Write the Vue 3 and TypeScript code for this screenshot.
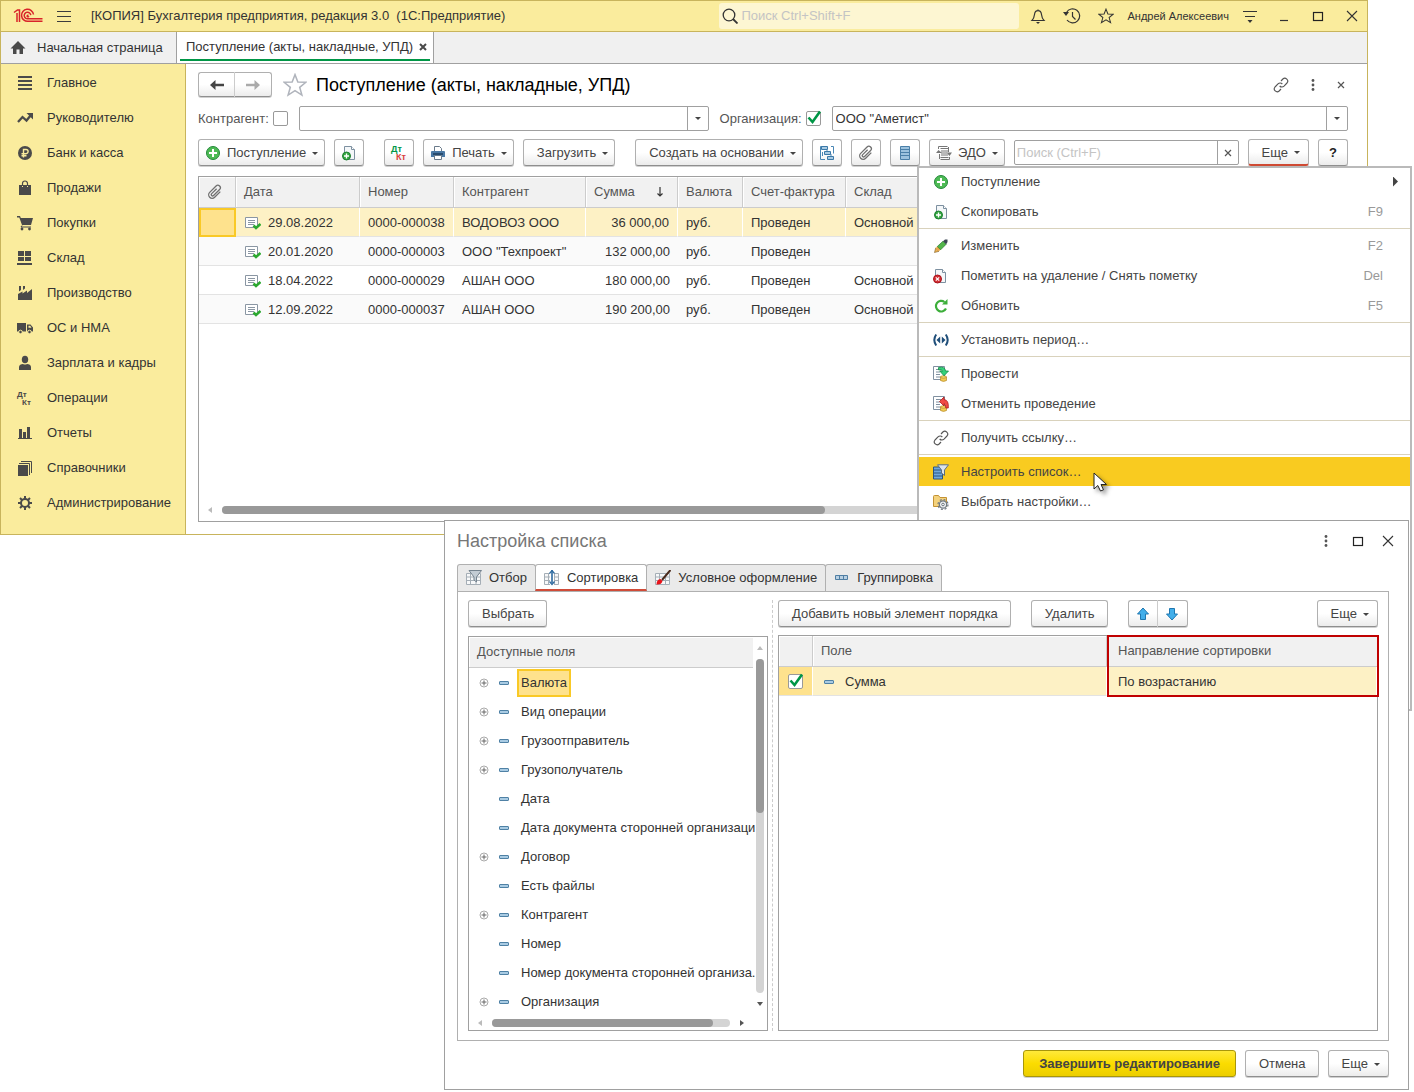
<script setup lang="ts">
import { ref } from 'vue'

interface NavItem { icon: string; label: string }
interface DocRow { date: string; num: string; partner: string; sum: string; store: string }
interface MenuItem { icon: string; label: string; key?: string; sub?: boolean; active?: boolean }
interface Field { label: string; open?: boolean; selected?: boolean }

const nav: NavItem[] = [
  { icon: 'lines', label: 'Главное' },
  { icon: 'trend', label: 'Руководителю' },
  { icon: 'ruble', label: 'Банк и касса' },
  { icon: 'bag', label: 'Продажи' },
  { icon: 'cart', label: 'Покупки' },
  { icon: 'store', label: 'Склад' },
  { icon: 'factory', label: 'Производство' },
  { icon: 'truck', label: 'ОС и НМА' },
  { icon: 'person', label: 'Зарплата и кадры' },
  { icon: 'dtkt', label: 'Операции' },
  { icon: 'chart', label: 'Отчеты' },
  { icon: 'books', label: 'Справочники' },
  { icon: 'gear', label: 'Администрирование' },
]

const docs: DocRow[] = [
  { date: '29.08.2022', num: '0000-000038', partner: 'ВОДОВОЗ ООО', sum: '36 000,00', store: 'Основной' },
  { date: '20.01.2020', num: '0000-000003', partner: 'ООО "Техпроект"', sum: '132 000,00', store: '' },
  { date: '18.04.2022', num: '0000-000029', partner: 'АШАН ООО', sum: '180 000,00', store: 'Основной' },
  { date: '12.09.2022', num: '0000-000037', partner: 'АШАН ООО', sum: '190 200,00', store: 'Основной' },
]

const menu: MenuItem[][] = [
  [
    { icon: 'plus', label: 'Поступление', sub: true },
    { icon: 'copy', label: 'Скопировать', key: 'F9' },
  ],
  [
    { icon: 'pencil', label: 'Изменить', key: 'F2' },
    { icon: 'docdel', label: 'Пометить на удаление / Снять пометку', key: 'Del' },
    { icon: 'refresh', label: 'Обновить', key: 'F5' },
  ],
  [{ icon: 'period', label: 'Установить период…' }],
  [
    { icon: 'post', label: 'Провести' },
    { icon: 'unpost', label: 'Отменить проведение' },
  ],
  [{ icon: 'link', label: 'Получить ссылку…' }],
  [
    { icon: 'setlist', label: 'Настроить список…', active: true },
    { icon: 'folder', label: 'Выбрать настройки…' },
  ],
]

const tabs = [
  { icon: 'tab-filter', label: 'Отбор' },
  { icon: 'tab-sort', label: 'Сортировка' },
  { icon: 'tab-format', label: 'Условное оформление' },
  { icon: 'tab-group', label: 'Группировка' },
]
const activeTab = ref(1)

const fields: Field[] = [
  { label: 'Валюта', open: true, selected: true },
  { label: 'Вид операции', open: true },
  { label: 'Грузоотправитель', open: true },
  { label: 'Грузополучатель', open: true },
  { label: 'Дата' },
  { label: 'Дата документа сторонней организаци' },
  { label: 'Договор', open: true },
  { label: 'Есть файлы' },
  { label: 'Контрагент', open: true },
  { label: 'Номер' },
  { label: 'Номер документа сторонней организа.' },
  { label: 'Организация', open: true },
]

const byPartner = ref(false)
const byOrg = ref(true)
const sortOn = ref(true)
const partner = ref('')
const org = ref('ООО "Аметист"')
</script>

<template>
  <svg class="sprite" aria-hidden="true">
    <symbol id="lines" viewBox="0 0 16 16"><path d="M1 2h14M1 6h14M1 10h14M1 14h14" stroke="#4a4a4a" stroke-width="2" /></symbol>
    <symbol id="trend" viewBox="0 0 16 16"><path d="M1 12l4.500-5 4 3.500L14 5" fill="none" stroke="#4a4a4a" stroke-width="2.300" /><path d="M9.500 3H16v6.500z" fill="#4a4a4a" /></symbol>
    <symbol id="ruble" viewBox="0 0 16 16"><circle cx="8" cy="8" r="7" fill="#4a4a4a" /><path d="M6.500 12.500V4.500h2.500a2 2 0 0 1 0 4.200H4.500M4.500 10.700h5" fill="none" stroke="#faec9d" stroke-width="1.400" /></symbol>
    <symbol id="bag" viewBox="0 0 16 16"><path d="M2 5h3v2h1V5h4v2h1V5h3v10H2z" fill="#4a4a4a" /><path d="M5.500 6V3.500a2.500 2.500 0 0 1 5 0V6" fill="none" stroke="#4a4a4a" stroke-width="1.200" /></symbol>
    <symbol id="cart" viewBox="0 0 16 16"><path d="M0 1h3l.8 2H16l-2 7H5L2.300 2.500H0z" fill="#4a4a4a" /><path d="M5 10.500L4 12h10" fill="none" stroke="#4a4a4a" /><circle cx="5" cy="14" r="1.400" fill="#4a4a4a" /><circle cx="12.500" cy="14" r="1.400" fill="#4a4a4a" /></symbol>
    <symbol id="store" viewBox="0 0 16 16"><path d="M1 1h6v5H1zM8 1h6v5H8zM1 7h6v4H1zM8 7h6v4H8zM0 13h15v2H0z" fill="#4a4a4a" /></symbol>
    <symbol id="factory" viewBox="0 0 16 16"><path d="M1 15V9l4.500-2.500v2L10 5.500v2.500L15 4v11zM2 1h2v4L2 6.500zM6 1h2v2.500L6 5z" fill="#4a4a4a" /></symbol>
    <symbol id="truck" viewBox="0 0 16 16"><path d="M0 3h9v8.500H0zM10 4.500h3.500L16 7.500v4h-6z" fill="#4a4a4a" /><path d="M11.500 5.800h1.700l1.300 2h-3z" fill="#faec9d" /><circle cx="3.500" cy="12" r="1.800" fill="#4a4a4a" stroke="#faec9d" /><circle cx="12.500" cy="12" r="1.800" fill="#4a4a4a" stroke="#faec9d" /></symbol>
    <symbol id="person" viewBox="0 0 16 16"><ellipse cx="8" cy="4.500" rx="3.200" ry="3.800" fill="#4a4a4a" /><path d="M2 15v-3c0-2 2-2.700 4-3 1.300.8 2.700.8 4 0 2 .3 4 1 4 3v3z" fill="#4a4a4a" /></symbol>
    <symbol id="chart" viewBox="0 0 16 16"><path d="M2 4h3v9H2zM6 7h3v6H6zM10 2h3v11h-3zM1 13h14v1H1z" fill="#4a4a4a" /></symbol>
    <symbol id="books" viewBox="0 0 16 16"><path d="M1 5h10v11H1z" fill="#4a4a4a" /><path d="M2 3.500h10.500V15M4 1.500h10.500V13" fill="none" stroke="#4a4a4a" /></symbol>
    <symbol id="gear" viewBox="0 0 16 16"><circle cx="8" cy="8" r="4" fill="none" stroke="#4a4a4a" stroke-width="2" /><path d="M8 1v3M8 12v3M1 8h3M12 8h3M3 3l2.200 2.200M10.800 10.800L13 13M13 3l-2.200 2.200M5.200 10.800L3 13" stroke="#4a4a4a" stroke-width="2" /></symbol>

    <symbol id="logo" viewBox="0 0 30 16">
      <g fill="none" stroke="#d8232a" stroke-width="1.500">
        <path d="M1 4.500L4.500 2H6.500V14M4 14V5" />
        <path d="M20.500 6.500A6 6 0 1 0 15 13.300H29.500" />
        <path d="M17.800 7.200A3.300 3.300 0 1 0 15 10.800H29.500" />
        <path d="M15.500 7.500a.8 .8 0 1 0 .2 .7" />
      </g>
    </symbol>
    <symbol id="home" viewBox="0 0 16 16"><path d="M8 1l7.500 7.500H13V14H9.500V9.500h-3V14H3V8.500H.5z" fill="#4a4a4a" /></symbol>
    <symbol id="burger" viewBox="0 0 16 16"><path d="M1 3.500h14M1 8.500h14M1 13.500h14" stroke="#3c3c3c" /></symbol>
    <symbol id="search" viewBox="0 0 16 16"><circle cx="7" cy="7" r="5.800" fill="none" stroke="#333" stroke-width="1.300" /><path d="M11 11l4.500 4.500" stroke="#333" stroke-width="1.800" /></symbol>
    <symbol id="bell" viewBox="0 0 16 16"><path d="M8 1.500v1M2 12.500c2-2 2.200-3.500 2.500-6C4.800 4 6 2.700 8 2.700S11.200 4 11.500 6.500c.3 2.500.5 4 2.500 6z" fill="none" stroke="#333" stroke-width="1.200" /><path d="M6 14h4l-2 2z" fill="#333" /></symbol>
    <symbol id="history" viewBox="0 0 18 16"><path d="M3.500 4.500A7 7 0 1 1 4 12" fill="none" stroke="#333" stroke-width="1.200" /><path d="M9.500 4v4.500l3 3" fill="none" stroke="#333" stroke-width="1.200" /><path d="M0 4h6L3 8z" fill="#333" /></symbol>
    <symbol id="star" viewBox="0 0 22 22"><path d="M11 1.500l2.600 6.700 7.400.3-5.700 4.600 2 7.100L11 16.200l-6.300 4 2-7.100L1 8.500l7.400-.3z" fill="none" stroke="currentColor" stroke-width="1.400" /></symbol>
    <symbol id="panel" viewBox="0 0 16 16"><path d="M1 3.500h14M3 8.500h10" stroke="#333" stroke-width="1.200" /><path d="M5.500 12h5L8 15z" fill="#333" /></symbol>
    <symbol id="min" viewBox="0 0 16 16"><path d="M4 12.500h8" stroke="#333" stroke-width="1.200" /></symbol>
    <symbol id="max" viewBox="0 0 16 16"><rect x="3.500" y="4.500" width="9" height="8" fill="none" stroke="#222" stroke-width="1.200" /></symbol>
    <symbol id="close" viewBox="0 0 16 16"><path d="M3 3l10 10M13 3L3 13" stroke="#333" stroke-width="1.100" /></symbol>
    <symbol id="cross" viewBox="0 0 8 8"><path d="M1 1l6 6M7 1L1 7" stroke="#555" stroke-width="1.200" /></symbol>
    <symbol id="cross-bold" viewBox="0 0 8 8"><path d="M1 1l6 6M7 1L1 7" stroke="#4a4a4a" stroke-width="2" /></symbol>
    <symbol id="dots" viewBox="0 0 4 14"><circle cx="2" cy="2.500" r="1.400" fill="#555" /><circle cx="2" cy="7" r="1.400" fill="#555" /><circle cx="2" cy="11.500" r="1.400" fill="#555" /></symbol>
    <symbol id="left" viewBox="0 0 16 16"><path d="M1 8l5.500-5v3.800H15v2.400H6.500V13z" fill="currentColor" /></symbol>
    <symbol id="link" viewBox="0 0 24 24"><g fill="none" stroke="#555" stroke-width="1.700"><path d="M10 13.500c1.800 2 4.600 2 6.500.2l4.500-4.700c3.500-4.200-2.300-9.500-6.200-6L12 6" /><path d="M14 10.500c-1.800-2-4.600-2-6.500-.2L3 15c-3.500 4.200 2.300 9.500 6.200 6L12 18" /></g></symbol>
    <symbol id="clip" viewBox="0 0 16 16"><g transform="rotate(45 8 8)" fill="none" stroke="#707070" stroke-width="1.300"><path d="M11.500 4v8a3.500 3.500 0 0 1-7 0V3a2.500 2.500 0 0 1 5 0v8.500a1.300 1.300 0 0 1-2.700 0V4.500" /></g></symbol>

    <symbol id="plus" viewBox="0 0 16 16"><circle cx="8" cy="8" r="6.500" fill="#4dba54" stroke="#23893a" /><path d="M8 4v8M4 8h8" stroke="#fff" stroke-width="2" /></symbol>
    <symbol id="copy" viewBox="0 0 16 16"><path d="M3.500 1.500h7l3 3v10h-10z" fill="#f4f7f9" stroke="#7d90a0" /><path d="M10.500 1.500v3h3" fill="#fff" stroke="#7d90a0" /><circle cx="5.500" cy="11" r="4" fill="#35a741" stroke="#1c7f31" /><path d="M5.500 8.500v5M3 11h5" stroke="#fff" stroke-width="1.300" /></symbol>
    <symbol id="docdel" viewBox="0 0 16 16"><path d="M2.500 1.500h7l3 3v10h-10z" fill="#f4f7f9" stroke="#7d90a0" /><path d="M9.500 1.500v3h3" fill="#fff" stroke="#7d90a0" /><circle cx="4.500" cy="11" r="4" fill="#d22f34" stroke="#a8141c" /><path d="M2.800 9.300l3.400 3.400M6.200 9.300l-3.400 3.400" stroke="#fff" stroke-width="1.200" /></symbol>
    <symbol id="pencil" viewBox="0 0 16 16"><path d="M1.500 14.500l1.200-4.500 3.300 3.300z" fill="#f0b452" stroke="#7a5a22" stroke-width=".6" /><path d="M2.700 10L5 7.900l3.200 3.200L6 13.300z" fill="#f0a94a" /><path d="M4.300 8.500L10 3.200l3.200 3L7.600 11.800z" fill="#52b54a" stroke="#2c7a30" stroke-width=".7" /><path d="M10 3.200L12 1.500h2.500V4l-1.300 2.200z" fill="#3d4654" /></symbol>
    <symbol id="refresh" viewBox="0 0 16 16"><path d="M13 10.500A5.300 5.300 0 1 1 11.500 4" fill="none" stroke="#3cae3a" stroke-width="2.200" /><path d="M9 6.500h5.500V1z" fill="#3cae3a" /></symbol>
    <symbol id="period" viewBox="0 0 16 16"><path d="M3.200 2.500q-3.800 5.500 0 11M12.800 2.500q3.800 5.500 0 11" fill="none" stroke="#1f4e79" stroke-width="2" /><path d="M7.200 4.500v7L3.500 8zM8.800 4.500v7L12.500 8z" fill="#1f4e79" /></symbol>
    <symbol id="post" viewBox="0 0 16 16"><path d="M.5 .5h11v13H.5z" fill="#fff" stroke="#8090a0" /><path d="M3 3.500h5M3 6h4M3 8.500h4M3 11h5" stroke="#8090a0" /><path d="M7.500 11v3.500q3 1.800 6 0V11z" fill="#f1cb52" stroke="#b4872b" stroke-width=".7" /><ellipse cx="10.500" cy="11" rx="3" ry="1.200" fill="#f7d96c" stroke="#b4872b" stroke-width=".7" /><path d="M5.500 1.500Q12 0 12.500 5h3L11 9.800 6.800 5H9.500Q9 3.500 5.500 3.800z" fill="#35d07a" stroke="#118a44" stroke-width=".8" /></symbol>
    <symbol id="unpost" viewBox="0 0 16 16"><path d="M.5 .5h11v13H.5z" fill="#fff" stroke="#8090a0" /><path d="M3 3.500h5M3 6h4M3 8.500h4M3 11h5" stroke="#8090a0" /><path d="M7.500 11v3.500q3 1.800 6 0V11z" fill="#f1cb52" stroke="#b4872b" stroke-width=".7" /><ellipse cx="10.500" cy="11" rx="3" ry="1.200" fill="#f7d96c" stroke="#b4872b" stroke-width=".7" /><path d="M6.500 5.500L11 1v2.500q5 .5 4.300 8.500h-2.500q.3-4-1.800-4.300V10z" fill="#f04a46" stroke="#b01a1c" stroke-width=".8" /></symbol>
    <symbol id="setlist" viewBox="0 0 16 16"><path d="M.5 3h9v12h-9z" fill="#6fa8dc" stroke="#2b5580" /><path d="M.5 6h9M.5 9h9M.5 12h9" stroke="#2b5580" /><path d="M4.500 .8h11L11.500 6v5.500L8.500 9V6z" fill="#dde4ea" stroke="#5d6f80" /></symbol>
    <symbol id="folder" viewBox="0 0 16 16"><path d="M.5 2.500q0-1 1-1h4l1.500 2h6.500v9H.5z" fill="#f4d27c" stroke="#c39234" /><circle cx="10" cy="10.500" r="3.700" fill="#eceff1" stroke="#6d7780" stroke-width="1.200" /><circle cx="10" cy="10.500" r="5" fill="none" stroke="#6d7780" stroke-width="1.200" stroke-dasharray="2 1.930" /><circle cx="10" cy="10.500" r="1.300" fill="#fff" stroke="#6d7780" /></symbol>

    <symbol id="printer" viewBox="0 0 16 16"><path d="M4.500 7V1.500h5l2 2V7" fill="#fff" stroke="#6a7a8a" /><path d="M2 6h12a1 1 0 0 1 1 1v5H1V7a1 1 0 0 1 1-1z" fill="#4a78a4" /><path d="M3 9h10" stroke="#1d3d5c" stroke-width="1.500" /><path d="M4.500 10.500h7v4h-7z" fill="#fff" stroke="#6a7a8a" /></symbol>
    <symbol id="struct" viewBox="0 0 16 16"><path d="M3 1.500H1.500v13H6M12 1.500h2.500v7M3.500 7v4M8 5v2M12 9v3" fill="none" stroke="#4a87b5" /><path d="M2.500 1.500h6v3h-6zM5.500 6.500h6v3h-6zM8.500 11.500h6v3h-6z" fill="#a9cbe3" stroke="#3a78a8" /></symbol>
    <symbol id="listblue" viewBox="0 0 16 16"><path d="M3.500 1.500h9v13h-9z" fill="#9cc2de" stroke="#4a7fa8" /><path d="M4 4.500h8M4 7.500h8M4 10.500h8" stroke="#4a7fa8" stroke-width="1.200" /></symbol>
    <symbol id="edo" viewBox="0 0 16 16"><g fill="none" stroke="#777"><path d="M2.500 4V1.500h9M13.500 12v2.500h-9M4.500 3.500h8M4.500 12.500h8M5 6h7M5 8h6M5 10h7" /><path d="M12.500 2v5M3.500 9v5" /></g><path d="M0 8h6L2.500 5zM10.500 7.500H16L13.500 11z" fill="#777" /></symbol>
    <symbol id="doc-ok" viewBox="0 0 16 14"><path d="M.5 1.500h12v10H.5z" fill="#fff" stroke="#8a96a3" /><path d="M3 4.500h7M3 6.500h7M3 8.500h6" stroke="#8a96a3" /><path d="M8.500 9.500l2.500 2.500 4.500-4" fill="none" stroke="#2ba82f" stroke-width="2.600" /></symbol>
    <symbol id="check" viewBox="0 0 16 16"><path d="M2.500 7.500L6.500 12 14 1.500" fill="none" stroke="#009646" stroke-width="2.600" /></symbol>
    <symbol id="sortdown" viewBox="0 0 8 12"><path d="M4 1v9M1.500 7.500L4 10l2.500-2.500" fill="none" stroke="#333" stroke-width="1.200" /></symbol>
    <symbol id="dash" viewBox="0 0 10 6"><rect x=".5" y="1.500" width="9" height="3" rx=".5" fill="#a9cbe3" stroke="#4f81a5" /></symbol>
    <symbol id="expand" viewBox="0 0 10 10"><circle cx="5" cy="5" r="4" fill="none" stroke="#aaa" /><path d="M5 2.500v5M2.500 5h5" stroke="#666" /></symbol>
    <symbol id="tab-filter" viewBox="0 0 16 16"><path d="M.5 3.500h14v11H.5zM.5 7h14M.5 10.500h14M4.500 4v11M10 4v11" fill="#f7f8f9" stroke="#a5aeb6" /><path d="M3 .5h12.500L10.500 7v5l-2.500-2V7z" fill="#c3ccd4" stroke="#75838f" /></symbol>
    <symbol id="tab-sort" viewBox="0 0 16 16"><path d="M.5 3.500h14v11H.5zM.5 7h14M.5 10.500h14M4.500 4v11M10.500 4v11" fill="#f7f8f9" stroke="#a5aeb6" /><path d="M6 2h4v13H6z" fill="#fff" /><path d="M8 0v13" stroke="#2d6a9f" stroke-width="1.600" /><path d="M5.500 3.500L8 .5l2.500 3M5.500 11.500L8 14.500l2.500-3" fill="none" stroke="#2d6a9f" stroke-width="1.200" /></symbol>
    <symbol id="tab-format" viewBox="0 0 16 16"><path d="M.5 3.500h14v11H.5zM.5 7h14M.5 10.500h14M4.500 4v11M10.500 4v11" fill="#f7f8f9" stroke="#a5aeb6" /><path d="M15.500 0L7 10" stroke="#4a2a1c" stroke-width="2" /><path d="M1.500 14.500q0-5 4-5.500l2 2q-1 4-6 3.500z" fill="#e8131a" /></symbol>
    <symbol id="tab-group" viewBox="0 0 16 16"><path d="M1.500 5.500h12v4h-12zM5.500 5.500v4M9.500 5.500v4" fill="#b9d0e2" stroke="#4f7ea3" /></symbol>
    <symbol id="up" viewBox="0 0 16 16"><path d="M8 2l5.500 6H10.500v5.500h-5V8h-3z" fill="#42aeea" stroke="#1f77b0" /></symbol>
    <symbol id="down" viewBox="0 0 16 16"><path d="M8 14l5.500-6H10.500V2.500h-5V8h-3z" fill="#42aeea" stroke="#1f77b0" /></symbol>
    <symbol id="cursor" viewBox="0 0 16 22"><path d="M1 1v16l3.800-3.500L7.500 19l3-1.200L8 12.500h5.500z" fill="#fff" stroke="#222" /></symbol>
  </svg>

  <div class="desktop">
    <main class="app">
      <header class="titlebar">
        <svg class="logo"><use href="#logo" /></svg>
        <button class="plain" aria-label="Меню"><svg class="ic"><use href="#burger" /></svg></button>
        <span class="caption">[КОПИЯ] Бухгалтерия предприятия, редакция 3.0&nbsp; (1С:Предприятие)</span>
        <label class="gsearch">
          <svg class="ic"><use href="#search" /></svg>
          <input type="text" placeholder="Поиск Ctrl+Shift+F" aria-label="Поиск" />
        </label>
        <button class="plain" aria-label="Уведомления"><svg class="ic"><use href="#bell" /></svg></button>
        <button class="plain" aria-label="История"><svg class="ic wide"><use href="#history" /></svg></button>
        <button class="plain" aria-label="Избранное"><svg class="ic"><use href="#star" /></svg></button>
        <span class="user">Андрей Алексеевич</span>
        <button class="plain" aria-label="Панель"><svg class="ic"><use href="#panel" /></svg></button>
        <div class="winbtns">
          <button class="plain" aria-label="Свернуть"><svg class="ic"><use href="#min" /></svg></button>
          <button class="plain" aria-label="Развернуть"><svg class="ic"><use href="#max" /></svg></button>
          <button class="plain" aria-label="Закрыть"><svg class="ic"><use href="#close" /></svg></button>
        </div>
      </header>

      <nav class="tabs">
        <a class="tab home" href="#"><svg class="ic"><use href="#home" /></svg>Начальная страница</a>
        <a class="tab current" href="#"><span class="tabtext">Поступление (акты, накладные, УПД)<svg class="x"><use href="#cross-bold" /></svg></span></a>
      </nav>

      <div class="body">
        <nav class="side">
          <a v-for="n in nav" :key="n.label" href="#">
            <svg v-if="n.icon === 'dtkt'" class="ic dtkt" viewBox="0 0 16 16"><text x="0" y="7">Дт</text><text x="5" y="15">Кт</text></svg>
            <svg v-else class="ic"><use :href="'#' + n.icon" /></svg>{{ n.label }}
          </a>
        </nav>

        <section class="content">
          <div class="head">
            <div class="pair">
              <button class="btn" aria-label="Назад"><svg class="ic"><use href="#left" /></svg></button>
              <button class="btn fwd" aria-label="Вперед"><svg class="ic"><use href="#left" /></svg></button>
            </div>
            <svg class="fav"><use href="#star" /></svg>
            <h1>Поступление (акты, накладные, УПД)</h1>
            <div class="headtools">
              <button class="plain" aria-label="Ссылка"><svg class="ic"><use href="#link" /></svg></button>
              <button class="plain" aria-label="Еще"><svg class="dots"><use href="#dots" /></svg></button>
              <button class="plain" aria-label="Закрыть"><svg class="x"><use href="#cross" /></svg></button>
            </div>
          </div>

          <div class="filters">
            <div class="filter">
              <label for="f-partner">Контрагент:</label>
              <span class="cb"><input v-model="byPartner" type="checkbox" aria-label="Отбор по контрагенту" /><svg v-if="byPartner"><use href="#check" /></svg></span>
              <span class="combo"><input id="f-partner" v-model="partner" type="text" /><button aria-label="Выбрать"><i class="caret" /></button></span>
            </div>
            <div class="filter org">
              <label for="f-org">Организация:</label>
              <span class="cb"><input v-model="byOrg" type="checkbox" aria-label="Отбор по организации" /><svg v-if="byOrg"><use href="#check" /></svg></span>
              <span class="combo"><input id="f-org" v-model="org" type="text" /><button aria-label="Выбрать"><i class="caret" /></button></span>
            </div>
          </div>

          <div class="toolbar">
            <button class="btn"><svg class="ic"><use href="#plus" /></svg>Поступление<i class="caret" /></button>
            <button class="btn sq" aria-label="Скопировать"><svg class="ic"><use href="#copy" /></svg></button>
            <button class="btn sq gap" aria-label="Проводки"><svg class="ic wide dtkt colored" viewBox="0 0 18 16"><text x="1" y="7">Дт</text><text class="kt" x="6" y="15">Кт</text></svg></button>
            <button class="btn"><svg class="ic"><use href="#printer" /></svg>Печать<i class="caret" /></button>
            <button class="btn text">Загрузить<i class="caret" /></button>
            <button class="btn text gap">Создать на основании<i class="caret" /></button>
            <button class="btn sq" aria-label="Структура"><svg class="ic"><use href="#struct" /></svg></button>
            <button class="btn sq" aria-label="Файлы"><svg class="ic"><use href="#clip" /></svg></button>
            <button class="btn sq" aria-label="Список"><svg class="ic"><use href="#listblue" /></svg></button>
            <button class="btn"><svg class="ic"><use href="#edo" /></svg>ЭДО<i class="caret" /></button>
            <span class="combo find"><input type="text" placeholder="Поиск (Ctrl+F)" aria-label="Поиск" /><button aria-label="Очистить"><svg class="x"><use href="#cross" /></svg></button></span>
            <button class="btn text more opened">Еще<i class="caret" /></button>
            <button class="btn sq help">?</button>
          </div>

          <div class="grid">
            <table class="docs">
              <colgroup><col class="c1" /><col class="c2" /><col class="c3" /><col class="c4" /><col class="c5" /><col class="c6" /><col class="c7" /><col /></colgroup>
              <thead>
                <tr>
                  <th><svg class="ic"><use href="#clip" /></svg></th>
                  <th>Дата</th><th>Номер</th><th>Контрагент</th>
                  <th><span class="sorted">Сумма<svg class="arrow"><use href="#sortdown" /></svg></span></th>
                  <th>Валюта</th><th>Счет-фактура</th><th>Склад</th>
                </tr>
              </thead>
              <tbody>
                <tr v-for="(d, i) in docs" :key="d.num" :class="{ sel: i === 0 }">
                  <td />
                  <td><span class="date"><svg class="okdoc"><use href="#doc-ok" /></svg>{{ d.date }}</span></td>
                  <td>{{ d.num }}</td><td>{{ d.partner }}</td><td class="num">{{ d.sum }}</td>
                  <td>руб.</td><td>Проведен</td><td>{{ d.store }}</td>
                </tr>
              </tbody>
            </table>
            <div class="hscroll"><i class="ar l" /><span class="track"><span class="thumb t60" /></span></div>
          </div>
        </section>
      </div>
    </main>

    <div class="menu" role="menu">
      <div v-for="(g, gi) in menu" :key="gi" class="group">
        <button v-for="m in g" :key="m.label" role="menuitem" :class="{ active: m.active }">
          <svg class="ic"><use :href="'#' + m.icon" /></svg>
          <span class="mlabel">{{ m.label }}</span>
          <kbd v-if="m.key">{{ m.key }}</kbd>
          <i v-if="m.sub" class="submark" />
          <svg v-if="m.active" class="cursor"><use href="#cursor" /></svg>
        </button>
      </div>
    </div>

    <section class="dialog" role="dialog" aria-labelledby="dlg-title">
      <header>
        <h2 id="dlg-title">Настройка списка</h2>
        <button class="plain" aria-label="Еще"><svg class="dots"><use href="#dots" /></svg></button>
        <button class="plain" aria-label="Развернуть"><svg class="ic"><use href="#max" /></svg></button>
        <button class="plain" aria-label="Закрыть"><svg class="ic"><use href="#close" /></svg></button>
      </header>

      <div class="dtabs" role="tablist">
        <button v-for="(t, i) in tabs" :key="t.label" role="tab" :aria-selected="activeTab === i" :class="{ on: activeTab === i }" @click="activeTab = i">
          <svg class="ic"><use :href="'#' + t.icon" /></svg>{{ t.label }}
        </button>
      </div>

      <div class="panel">
        <div class="leftcol">
          <div class="bar"><button class="btn text">Выбрать</button></div>
          <div class="tree">
            <div class="treemain">
              <div class="treehead">Доступные поля</div>
              <ul>
                <li v-for="f in fields" :key="f.label">
                  <span class="exp"><svg v-if="f.open"><use href="#expand" /></svg></span>
                  <svg class="dash"><use href="#dash" /></svg>
                  <span class="fl" :class="{ picked: f.selected }">{{ f.label }}</span>
                </li>
              </ul>
              <div class="hscroll"><i class="ar l" /><span class="track"><span class="thumb t93" /></span><i class="ar r" /></div>
            </div>
            <div class="vscroll"><i class="ar u" /><span class="track"><span class="thumb" /></span><i class="ar d" /></div>
          </div>
        </div>

        <div class="rightcol">
          <div class="bar">
            <button class="btn text">Добавить новый элемент порядка</button>
            <button class="btn text gap">Удалить</button>
            <div class="pair gap">
              <button class="btn" aria-label="Вверх"><svg class="ic"><use href="#up" /></svg></button>
              <button class="btn" aria-label="Вниз"><svg class="ic"><use href="#down" /></svg></button>
            </div>
            <button class="btn text more last">Еще<i class="caret" /></button>
          </div>
          <div class="order">
            <table>
              <colgroup><col class="o1" /><col /><col class="o3" /></colgroup>
              <thead><tr><th /><th>Поле</th><th>Направление сортировки</th></tr></thead>
              <tbody>
                <tr class="sel">
                  <td class="mark"><span class="cb"><input v-model="sortOn" type="checkbox" aria-label="Использовать" /><svg v-if="sortOn"><use href="#check" /></svg></span></td>
                  <td><span class="date"><svg class="dash"><use href="#dash" /></svg>Сумма</span></td>
                  <td>По возрастанию</td>
                </tr>
              </tbody>
            </table>
            <div class="callout" />
          </div>
        </div>
      </div>

      <footer>
        <button class="btn text primary">Завершить редактирование</button>
        <button class="btn text">Отмена</button>
        <button class="btn text more">Еще<i class="caret" /></button>
      </footer>
    </section>
  </div>
</template>

<style>
body { margin: 0; background: #fff; }
</style>

<style scoped>
* { box-sizing: border-box; }
.sprite { position: absolute; width: 0; height: 0; }
.desktop { position: relative; min-height: 1092px; font: 13px/16px "Liberation Sans", Arial, sans-serif; color: #333; }
button, input { font: inherit; color: inherit; margin: 0; }
a { color: inherit; text-decoration: none; }
svg { flex: none; display: block; }
.ic { width: 16px; height: 16px; }
.ic.wide { width: 18px; }
.dtkt { font-size: 8px; font-weight: 700; fill: #4a4a4a; overflow: visible; }
.dtkt.colored { font-size: 9px; fill: #009646; }
.dtkt .kt { fill: #d9403c; }
.x { width: 8px; height: 8px; }
.dots { width: 4px; height: 14px; }
.plain { border: 0; background: none; padding: 0; display: flex; }
.caret { flex: none; border: 3px solid transparent; border-top-color: #444; border-bottom: 0; }

.app { margin-right: 46px; border: 1px solid #c8b45c; }
.titlebar { display: flex; align-items: center; height: 31px; padding: 0 7px 0 12px; background: #faec9d; border-bottom: 1px solid #c8b45c; }
.logo { width: 30px; height: 16px; margin-right: 13px; }
.caption { margin-left: 19px; margin-right: auto; white-space: nowrap; }
.gsearch { display: flex; align-items: center; gap: 3px; width: 300px; height: 26px; padding: 0 3px; margin-right: 11px; border-radius: 3px; background: #fdf6d2; }
.gsearch input { flex: 1; min-width: 0; padding: 0; border: 0; outline: 0; background: none; }
input::placeholder { color: #c4c4c4; opacity: 1; }
.titlebar > .plain + .plain { margin-left: 17px; }
.user { font-size: 11px; margin: 0 13px; white-space: nowrap; }
.winbtns { display: flex; gap: 18px; margin-left: 18px; }

.tabs { display: flex; height: 32px; background: #f0f0f0; border-bottom: 1px solid #a0a0a0; }
.tab { display: flex; align-items: center; white-space: nowrap; }
.home { width: 175px; gap: 11px; padding-left: 9px; }
.current { align-items: flex-start; height: 31px; padding: 0 3px; background: #fff; border: solid #a0a0a0; border-width: 0 1px; }
.tabtext { display: flex; align-items: center; gap: 6px; height: 29px; padding: 3px 3px 0 6px; border-bottom: 2px solid #009646; }

.body { display: flex; }
.side { flex: none; width: 185px; padding: 1px 0 14px; background: #faec9d; border-right: 1px solid #c8b45c; }
.side a { display: flex; align-items: center; gap: 14px; height: 35px; padding-left: 16px; }
.content { flex: 1; min-width: 0; display: flex; flex-direction: column; padding: 8px 19px 12px 12px; background: #fff; }

.head { display: flex; align-items: center; height: 25px; }
.btn { flex: none; display: flex; align-items: center; justify-content: center; gap: 6px; height: 27px; padding: 1px 6px 0; border: 1px solid #b0b0b0; border-bottom-color: #8f8f8f; border-radius: 3px; background: linear-gradient(#fff 50%, #ececec); box-shadow: 0 1px 0 #d0d0d0; color: #444; white-space: nowrap; }
.btn.text { padding-left: 13px; padding-right: 12px; }
.btn.text:has(.caret) { padding-right: 6px; }
.btn.text.more { padding-right: 8px; }
.btn.sq { width: 30px; padding: 0; }
.pair { display: flex; }
.pair .btn { height: 25px; width: 37px; padding: 0; }
.pair .btn:first-child { border-radius: 3px 0 0 3px; border-right-color: #ccc; }
.pair .btn:last-child { border-radius: 0 3px 3px 0; border-left: 0; }
.fwd { color: #aaa; }
.fwd svg { transform: scaleX(-1); }
.fav { width: 24px; height: 24px; margin: 0 9px 0 11px; color: #b0b4bc; }
h1 { margin: 0; font-size: 18px; line-height: 24px; font-weight: 400; color: #000; white-space: nowrap; }
.headtools { display: flex; align-items: center; gap: 22px; margin-left: auto; padding-right: 3px; }

.filters { display: flex; gap: 11px; margin-top: 9px; }
.filter { display: flex; align-items: center; flex: 511 1 0; }
.filter.org { flex: 629 1 0; }
.filter label { color: #555; }
.cb { position: relative; flex: none; width: 15px; height: 15px; margin: 0 11px 0 4px; }
.cb input { appearance: none; display: block; width: 15px; height: 15px; border: 1px solid #999; border-radius: 2px; background: #fff; }
.cb svg { position: absolute; left: 0; top: -1px; width: 16px; height: 16px; pointer-events: none; }
.combo { flex: 1; min-width: 0; display: flex; height: 25px; border: 1px solid #a0a0a0; border-radius: 2px; background: #fff; }
.combo input { flex: 1; min-width: 0; padding: 0 3px; border: 0; outline: 0; background: none; }
.combo button { display: flex; align-items: center; justify-content: center; width: 21px; padding: 0; border: 0; border-left: 1px solid #a0a0a0; background: none; }

.toolbar { display: flex; gap: 9px; margin-top: 8px; align-items: center; }
.gap { margin-left: 11px; }
.find input { padding: 0 2px; }
.opened { border-bottom: 2px solid #cf4a33; }
.help { font-weight: 700; color: #222; }

table { width: 100%; border-collapse: separate; border-spacing: 0; table-layout: fixed; }
th, td { padding: 0 8px; text-align: left; font-weight: 400; white-space: nowrap; overflow: hidden; }
th { height: 31px; background: #f1f1f1; color: #555; border-right: 1px solid #ccc; border-bottom: 1px solid #ccc; box-shadow: inset 1px 1px 0 #fff; }
td { height: 29px; padding-top: 1px; border-bottom: 1px solid #e3e3e3; }
th:last-child { border-right: 0; }
tbody tr:nth-child(even) td { background: #fafafa; }
tbody tr.sel td { background: #fdf1c5; border-right: 1px solid #fff; }
.grid { flex: 1; display: flex; flex-direction: column; margin-top: 10px; border: 1px solid #a0a0a0; }
.docs .c1 { width: 37px; }
.docs .c2 { width: 124px; }
.docs .c3 { width: 94px; }
.docs .c4 { width: 132px; }
.docs .c5 { width: 92px; }
.docs .c6 { width: 65px; }
.docs .c7 { width: 103px; }
.docs tbody tr.sel td:first-child { background: #fee28d; border: 2px solid #f9c926; }
.sorted { display: flex; justify-content: space-between; align-items: center; padding-right: 5px; }
.arrow { width: 8px; height: 12px; }
.date { display: flex; align-items: center; gap: 7px; }
.okdoc { width: 16px; height: 14px; margin-left: 1px; }
.num { text-align: right; }

.hscroll { display: flex; align-items: center; height: 16px; margin-top: auto; padding: 0 9px; gap: 10px; }
.grid .hscroll { margin-bottom: 3px; }
.track { flex: 1; display: flex; height: 8px; border-radius: 4px; background: #d4d4d4; }
.thumb { border-radius: 4px; background: #999; }
.t60 { width: 54%; }
.t93 { width: 93%; }
.ar { flex: none; width: 4px; height: 6px; background: #555; }
.ar.l { background: #bbb; clip-path: polygon(100% 0, 100% 100%, 0 50%); }
.ar.r { clip-path: polygon(0 0, 0 100%, 100% 50%); }
.ar.u { width: 6px; height: 4px; background: #bbb; clip-path: polygon(0 100%, 100% 100%, 50% 0); }
.ar.d { width: 6px; height: 4px; clip-path: polygon(0 0, 100% 0, 50% 100%); }

.menu { position: absolute; top: 166px; right: 2px; width: 495px; height: 545px; border: 1px solid #bababa; box-shadow: inset 0 0 0 1px #bababa; background: #fff; }
.group { display: flex; flex-direction: column; gap: 1px; margin: 0 1px; padding-bottom: 2px; border-bottom: 1px solid #d9d2bc; }
.group + .group { padding-top: 2px; }
.group:last-child { border: 0; }
.group button { position: relative; display: flex; align-items: center; gap: 12px; height: 29px; padding: 0 27px 0 14px; border: 0; background: none; text-align: left; color: #444; }
.group button.active { background: #f9cb20; }
.mlabel { flex: 1; }
kbd { font: inherit; color: #999; }
.submark { width: 5px; height: 10px; margin-right: -15px; background: #444; clip-path: polygon(0 0, 0 100%, 100% 50%); }
.cursor { position: absolute; left: 174px; top: 15px; width: 16px; height: 22px; z-index: 1; filter: drop-shadow(3px 3px 2px rgba(0, 0, 0, .4)); }

.dialog { position: absolute; top: 520px; left: 444px; right: 5px; padding: 0 19px 12px 12px; border: 1px solid #a0a0a0; background: #fff; }
.dialog header { display: flex; align-items: center; height: 43px; gap: 22px; margin-right: -7px; padding-bottom: 3px; }
.dialog header .plain:last-child { margin-left: -8px; }
h2 { flex: 1; margin: 0; font-size: 18px; line-height: 24px; font-weight: 400; color: #777; }
.dtabs { display: flex; }
.dtabs button { display: flex; align-items: center; gap: 7px; height: 27px; padding: 0 8px 0 8px; margin-right: -1px; border: 1px solid #b0b0b0; border-bottom: 0; border-radius: 3px 3px 0 0; background: #eaeaea; }
.dtabs button.on { background: #fff; border-bottom: 2px solid #d04b38; padding-top: 1px; z-index: 1; }
.panel { display: flex; padding: 8px 10px 9px; border: 1px solid #b0b0b0; }
.leftcol { flex: none; width: 305px; padding-right: 4px; border-right: 1px dashed #ccc; }
.rightcol { flex: 1; min-width: 0; display: flex; flex-direction: column; padding-left: 5px; }
.bar { display: flex; height: 27px; margin-bottom: 8px; gap: 9px; }
.bar .pair .btn { width: 30px; height: 27px; }
.last { margin-left: auto; }
.tree { display: flex; height: 395px; margin-top: 9px; border: 1px solid #a0a0a0; }
.treemain { flex: 1; min-width: 0; display: flex; flex-direction: column; }
.treehead { height: 31px; padding: 7px 8px; background: #f1f1f1; color: #555; border-bottom: 1px solid #ccc; box-shadow: inset 1px 1px 0 #fff; }
.tree ul { list-style: none; margin: 0; padding: 0; }
.tree li { display: flex; align-items: center; height: 29px; padding-left: 10px; white-space: nowrap; }
.exp { flex: none; width: 10px; margin-right: 10px; }
.exp svg { width: 10px; height: 10px; }
.dash { width: 10px; height: 6px; }
.fl { margin-left: 8px; padding: 4px 2px; border: 2px solid transparent; }
.picked { background: #fee28d; border-color: #f9c926; }
.vscroll { flex: none; width: 14px; display: flex; flex-direction: column; align-items: center; gap: 9px; padding: 9px 0 24px; }
.vscroll .track { width: 8px; display: block; }
.vscroll .thumb { display: block; height: 46%; }
.order { position: relative; flex: 1; border: 1px solid #a0a0a0; }
.o1 { width: 34px; }
.o3 { width: 270px; }
.order th:last-child, .order td:last-child { padding-left: 11px; }
.order .mark { padding: 0 9px; background: #fee28d !important; }
.order .cb { display: block; margin: 0; }
.order .dash { margin-left: 3px; margin-right: 4px; }
.callout { position: absolute; top: -1px; right: -2px; width: 272px; height: 62px; border: 2px solid #c00000; pointer-events: none; }
.dialog footer { display: flex; justify-content: flex-end; gap: 9px; margin-top: 9px; }
.btn.primary { padding: 1px 15px 0; border-color: #a8960a; background: linear-gradient(#ffe93a, #fbdc00 50%, #ecce00); font-weight: 700; }
</style>
